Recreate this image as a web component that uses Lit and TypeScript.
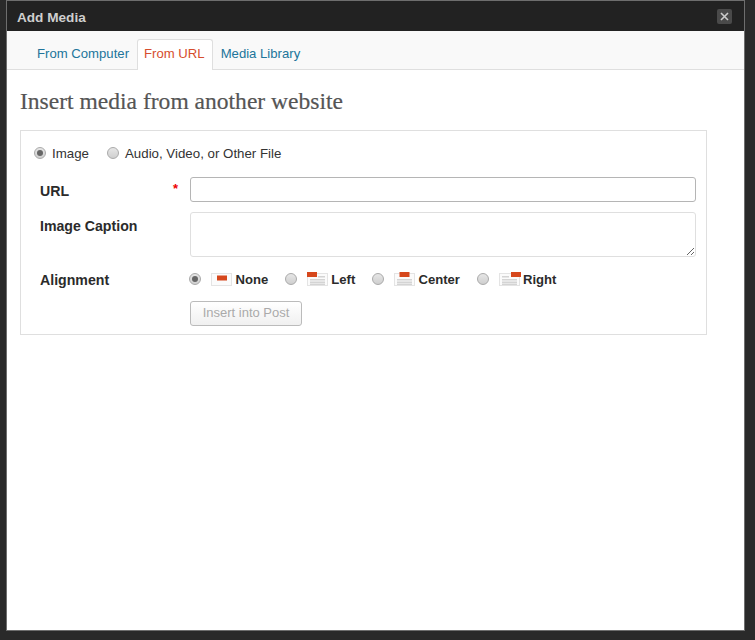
import { LitElement, html, css, svg } from "lit";
import { customElement } from "lit/decorators.js";

const paper = svg`<rect x="0.5" y="2.5" width="20" height="12" fill="#fbfbfb" stroke="#e4e4e4"/>`;
const lines = (x: number, w: number, y: number[]) =>
  y.map((v) => svg`<rect x="${x}" y="${v}" width="${w}" height="1.5" fill="#d4d4d4"/>`);

const icons: Record<string, unknown> = {
  none: svg`${paper}<rect x="6" y="4.5" width="10" height="5" fill="#d6471c"/>`,
  left: svg`${paper}${lines(3, 15, [8, 10.5, 12.5])}<rect x="0" y="1" width="10" height="5" fill="#d6471c"/><rect x="11" y="5" width="7" height="1.5" fill="#d4d4d4"/>`,
  center: svg`${paper}${lines(3, 15, [8, 10.5, 12.5])}<rect x="5.5" y="1" width="10" height="5" fill="#d6471c"/>`,
  right: svg`${paper}${lines(3, 15, [8, 10.5, 12.5])}<rect x="12" y="1" width="10" height="5" fill="#d6471c"/><rect x="3" y="5" width="7" height="1.5" fill="#d4d4d4"/>`,
};

@customElement("app-root")
export class AppRoot extends LitElement {
  static styles = css`
    :host {
      display: block;
      height: 640px;
      box-sizing: border-box;
      padding: 1px 11px 10px 7px;
      background: #2a2a2a;
      font-family: "Liberation Sans", Arial, sans-serif;
      color: #333;
    }
    .modal {
      height: 100%;
      display: flex;
      flex-direction: column;
      background: #fff;
      box-shadow: 0 0 0 1px #6e6e6e;
    }
    .head {
      height: 30px;
      flex: none;
      box-sizing: border-box;
      background: #222;
      display: flex;
      align-items: center;
      justify-content: space-between;
      padding: 2px 12px 0 10px;
      color: #cfcfcf;
      font-size: 13.6px;
      font-weight: bold;
    }
    .close {
      width: 15px;
      height: 15px;
      margin-top: -2px;
      background: #4a4a4a;
      border-radius: 2px;
      display: flex;
      align-items: center;
      justify-content: center;
    }
    .tabs {
      height: 39px;
      flex: none;
      box-sizing: border-box;
      background: #f9f9f9;
      border-bottom: 1px solid #dfdfdf;
      display: flex;
      align-items: flex-end;
      padding-left: 23px;
      gap: 1px;
      font-size: 13.15px;
    }
    .tab {
      height: 31px;
      box-sizing: border-box;
      padding: 8px 7px 0;
      color: #21759b;
      line-height: 16px;
    }
    .tab.on {
      color: #d64e2e;
      background: #fff;
      border: 1px solid #dfdfdf;
      border-bottom: 0;
      height: 31px;
      margin-bottom: -1px;
      border-radius: 3px 3px 0 0;
      padding: 6px 7px 0 6px;
    }
    .body {
      padding: 18px 37px 0 13px;
    }
    h2 {
      margin: 0;
      font: 400 23.55px/26px "Liberation Serif", Georgia, serif;
      color: #555;
      -webkit-text-stroke: 0.2px #555;
    }
    .box {
      margin-top: 16px;
      height: 205px;
      box-sizing: border-box;
      border: 1px solid #dfdfdf;
      padding: 14px 10px 0 13px;
    }
    .type {
      display: flex;
      align-items: center;
      height: 16px;
      font-size: 13.3px;
      color: #333;
    }
    .radio {
      width: 12px;
      height: 12px;
      flex: none;
      box-sizing: border-box;
      border-radius: 50%;
      border: 1px solid #aaa;
      background: linear-gradient(#e6e6e6, #cfcfcf);
      display: flex;
      align-items: center;
      justify-content: center;
    }
    .radio.on::after {
      content: "";
      width: 6px;
      height: 6px;
      border-radius: 50%;
      background: #666;
    }
    .type .radio { margin-right: 6px; }
    .type .gap { margin-right: 18px; }
    .form {
      margin-top: 16px;
      display: grid;
      grid-template-columns: 150px 1fr;
      padding-left: 6px;
      color: #2b2b2b;
    }
    .label {
      font-size: 14.15px;
      font-weight: bold;
      position: relative;
    }
    .req {
      position: absolute;
      left: 133px;
      top: 5px;
      color: #e00;
      font-size: 13px;
      line-height: 13px;
    }
    .url {
      height: 25px;
      box-sizing: border-box;
      border: 1px solid #b5b5b5;
      border-radius: 3px;
      background: #fff;
      margin-bottom: 10px;
    }
    .l-url { line-height: 28px; }
    .l-cap { line-height: 28px; }
    .cap {
      display: block;
      width: 100%;
      height: 45px;
      box-sizing: border-box;
      border: 1px solid #dfdfdf;
      border-radius: 3px;
      background: #fff;
      margin: 0 0 14px;
      padding: 0;
    }
    .l-al { line-height: 18px; }
    .align {
      display: flex;
      align-items: center;
      height: 16px;
      font-size: 13.1px;
      font-weight: bold;
      margin-left: -1px;
    }
    .align svg { flex: none; display: block; margin: 0 2.5px 0 10px; }
    .align .word { margin-right: 16.6px; }
    .btn {
      grid-column: 2;
      justify-self: start;
      margin-top: 12px;
      width: 112px;
      height: 25px;
      box-sizing: border-box;
      border: 1px solid #bbb;
      border-radius: 3px;
      background: linear-gradient(#fff, #f0f0f0);
      color: #aaa;
      font: 13px/21px "Liberation Sans", Arial, sans-serif;
      text-align: center;
      padding: 0 0 2px;
    }
  `;

  private alignOption(id: string, word: string, on = false) {
    return html`<span class="radio ${on ? "on" : ""}"></span>
      <svg width="22" height="16" viewBox="0 0 22 16">${icons[id]}</svg>
      <span class="word">${word}</span>`;
  }

  render() {
    return html`
      <div class="modal">
        <div class="head">
          <span>Add Media</span>
          <span class="close">
            <svg width="11" height="11" viewBox="0 0 11 11">
              <path d="M2 2l7 7M9 2l-7 7" stroke="#ccc" stroke-width="1.6" fill="none" />
            </svg>
          </span>
        </div>
        <div class="tabs">
          <span class="tab">From Computer</span>
          <span class="tab on">From URL</span>
          <span class="tab">Media Library</span>
        </div>
        <div class="body">
          <h2>Insert media from another website</h2>
          <div class="box">
            <div class="type">
              <span class="radio on"></span><span class="gap">Image</span>
              <span class="radio"></span><span>Audio, Video, or Other File</span>
            </div>
            <div class="form">
              <div class="label l-url">URL<span class="req">*</span></div>
              <div class="url"></div>
              <div class="label l-cap">Image Caption</div>
              <textarea class="cap"></textarea>
              <div class="label l-al">Alignment</div>
              <div class="align">
                ${this.alignOption("none", "None", true)}
                ${this.alignOption("left", "Left")}
                ${this.alignOption("center", "Center")}
                ${this.alignOption("right", "Right")}
              </div>
              <button class="btn" disabled>Insert into Post</button>
            </div>
          </div>
        </div>
      </div>
    `;
  }
}
